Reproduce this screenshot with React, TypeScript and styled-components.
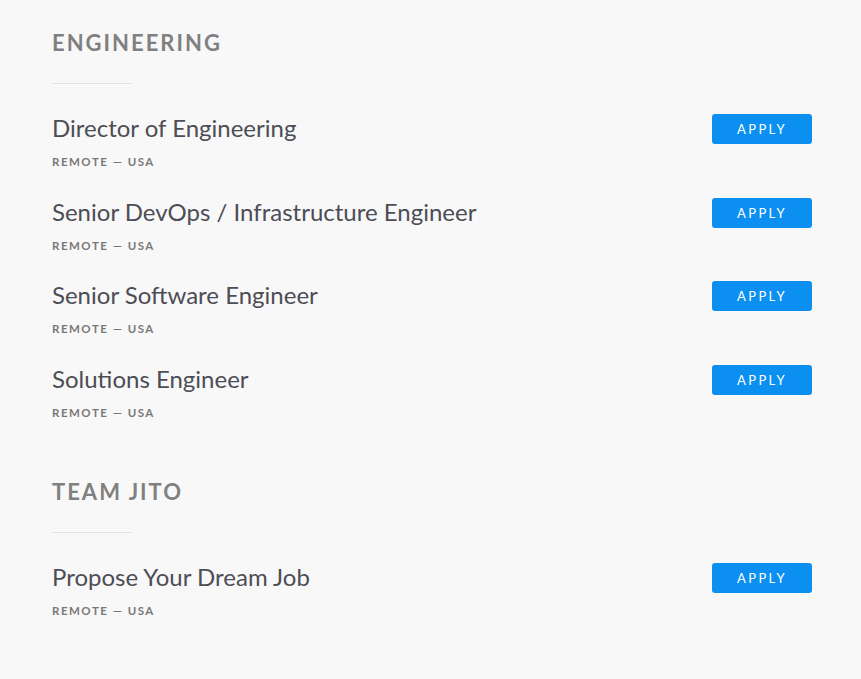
import React from 'react'
import styled, { createGlobalStyle } from 'styled-components'

const GlobalStyle = createGlobalStyle`
  html, body {
    margin: 0;
    padding: 0;
    background: #f8f8f8;
    font-family: Lato, "Open Sans", sans-serif;
  }
`

type Job = { title: string; place: string }

const sections: { name: string; jobs: Job[] }[] = [
  {
    name: 'Engineering',
    jobs: [
      { title: 'Director of Engineering', place: 'Remote — USA' },
      { title: 'Senior DevOps / Infrastructure Engineer', place: 'Remote — USA' },
      { title: 'Senior Software Engineer', place: 'Remote — USA' },
      { title: 'Solutions Engineer', place: 'Remote — USA' },
    ],
  },
  {
    name: 'Team Jito',
    jobs: [{ title: 'Propose Your Dream Job', place: 'Remote — USA' }],
  },
]

export default function App() {
  return (
    <>
      <GlobalStyle />
      <Page>
        {sections.map((s) => (
          <Section key={s.name}>
            <SectionTitle>{s.name}</SectionTitle>
            <Divider />
            <JobList>
              {s.jobs.map((j) => (
                <JobRow key={j.title}>
                  <JobInfo>
                    <JobTitle>{j.title}</JobTitle>
                    <JobPlace>{j.place}</JobPlace>
                  </JobInfo>
                  <ApplyButton>Apply</ApplyButton>
                </JobRow>
              ))}
            </JobList>
          </Section>
        ))}
      </Page>
    </>
  )
}

const Page = styled.div`
  width: 760px;
  padding: 29px 0 40px 52px;
  display: flex;
  flex-direction: column;
  gap: 58.5px;
`

const Section = styled.section`
  display: flex;
  flex-direction: column;
`

const SectionTitle = styled.h2`
  margin: 0;
  font-size: 22px;
  line-height: 28px;
  font-weight: 700;
  color: #808080;
  text-transform: uppercase;
  letter-spacing: 2px;
`

const Divider = styled.hr`
  width: 80px;
  margin: 26px 0 0;
  border: none;
  border-top: 1px solid #e3e3e3;
`

const JobList = styled.div`
  display: flex;
  flex-direction: column;
  gap: 27.5px;
  margin-top: 29px;
`

const JobRow = styled.div`
  display: flex;
  justify-content: space-between;
  align-items: flex-start;
`

const JobInfo = styled.div`
  display: flex;
  flex-direction: column;
  gap: 12px;
`

const JobTitle = styled.div`
  font-size: 24px;
  line-height: 30px;
  color: #4d4d55;
`

const JobPlace = styled.div`
  font-size: 11.5px;
  line-height: 14px;
  font-weight: 700;
  color: #787878;
  text-transform: uppercase;
  letter-spacing: 1.5px;
`

const ApplyButton = styled.button`
  width: 100px;
  height: 30px;
  margin-top: 1px;
  border: none;
  border-radius: 3px;
  background: #0b8ff0;
  color: #fff;
  font-family: Lato, "Open Sans", sans-serif;
  font-size: 13px;
  letter-spacing: 2.4px;
  text-transform: uppercase;
  cursor: pointer;
`
